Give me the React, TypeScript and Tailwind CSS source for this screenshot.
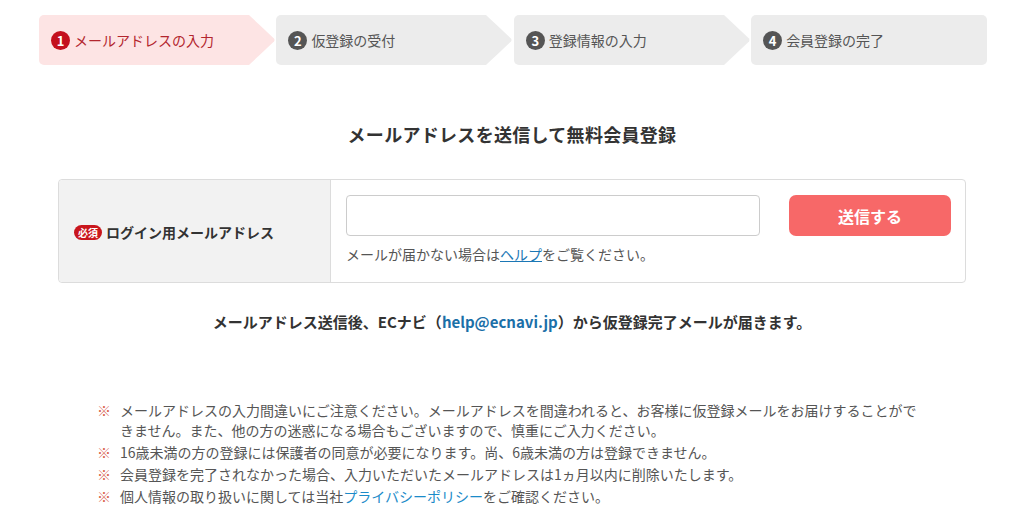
import React from "react";

const font = { fontFamily: '"Noto Sans CJK JP", "Noto Sans", sans-serif' };

function Step({ n, label, active, last }: { n: number; label: string; active?: boolean; last?: boolean }) {
  const bg = active ? "#fde4e4" : "#ececec";
  return (
    <div className="flex flex-1 h-[50px]">
      <div
        className={`flex flex-1 items-center pl-[12px] gap-[4px] ${last ? "rounded-[5px]" : "rounded-l-[5px]"} ${active ? "bg-[#fde4e4]" : "bg-[#ececec]"}`}
      >
        <span
          className={`flex h-[19px] w-[19px] items-center justify-center rounded-full text-[13px] font-bold leading-none text-white ${active ? "bg-[#c4101d]" : "bg-[#555555]"}`}
        >
          {n}
        </span>
        <span className={`text-[14px] ${active ? "text-[#b3262e]" : "text-[#555555]"}`}>{label}</span>
      </div>
      {!last && (
        <svg width="28" height="50" viewBox="0 0 28 50" className="block">
          <path d="M0 0 L2 0 L27 23.5 Q28 25 27 26.5 L2 50 L0 50 Z" fill={bg} />
        </svg>
      )}
    </div>
  );
}

export default function App() {
  return (
    <div className="w-[1024px] h-[525px] bg-white overflow-hidden text-[#333333]" style={font}>
      <div className="flex gap-[1.5px] w-[948px] ml-[39px] pt-[15px]">
        <Step n={1} label="メールアドレスの入力" active />
        <Step n={2} label="仮登録の受付" />
        <Step n={3} label="登録情報の入力" />
        <Step n={4} label="会員登録の完了" last />
      </div>

      <h1 className="mt-[57px] text-center text-[18px] font-bold leading-[24px] tracking-[0.3px] text-[#333333]">
        メールアドレスを送信して無料会員登録
      </h1>

      <div className="mx-auto mt-[33px] flex w-[908px] h-[104px] rounded-[4px] border border-[#dcdcdc]">
        <div className="flex w-[272px] items-center gap-[4px] rounded-l-[4px] border-r border-[#dcdcdc] bg-[#f2f2f2] pl-[15px] pt-[3px]">
          <span className="flex h-[15px] items-center rounded-full bg-[#c9161d] px-[4px] text-[10px] font-bold leading-none text-white">
            必須
          </span>
          <span className="text-[14px] font-bold text-[#333333]">ログイン用メールアドレス</span>
        </div>
        <div className="flex-1 pl-[15px] pt-[15px]">
          <div className="flex items-start">
            <input
              type="text"
              className="h-[41px] w-[414px] rounded-[4px] border border-[#cccccc] bg-white outline-none"
            />
            <button className="ml-[29px] h-[41px] w-[162px] rounded-[7px] bg-[#f76868] text-[16px] font-bold text-white">
              送信する
            </button>
          </div>
          <p className="mt-[8px] text-[14px] leading-[20px] text-[#555555]">
            メールが届かない場合は<a className="text-[#1b77b5] underline">ヘルプ</a>をご覧ください。
          </p>
        </div>
      </div>

      <p className="mt-[29px] text-center text-[15px] font-bold leading-[20px] text-[#333333]">
        メールアドレス送信後、ECナビ（<span className="text-[#1b6fa8]">help@ecnavi.jp</span>）から仮登録完了メールが届きます。
      </p>

      <ul className="ml-[97px] mt-[69px] w-[830px] text-[14px] leading-[19.5px] text-[#555555]">
        <li className="flex">
          <span className="w-[23px] shrink-0 text-[#d9624f]">※</span>
          <span>
            メールアドレスの入力間違いにご注意ください。メールアドレスを間違われると、お客様に仮登録メールをお届けすることができません。また、他の方の迷惑になる場合もございますので、慎重にご入力ください。
          </span>
        </li>
        <li className="mt-[2.5px] flex">
          <span className="w-[23px] shrink-0 text-[#d9624f]">※</span>
          <span>16歳未満の方の登録には保護者の同意が必要になります。尚、6歳未満の方は登録できません。</span>
        </li>
        <li className="mt-[2.5px] flex">
          <span className="w-[23px] shrink-0 text-[#d9624f]">※</span>
          <span>会員登録を完了されなかった場合、入力いただいたメールアドレスは1ヵ月以内に削除いたします。</span>
        </li>
        <li className="mt-[2.5px] flex">
          <span className="w-[23px] shrink-0 text-[#d9624f]">※</span>
          <span>
            個人情報の取り扱いに関しては当社<a className="text-[#1b8bc9]">プライバシーポリシー</a>をご確認ください。
          </span>
        </li>
      </ul>
    </div>
  );
}
